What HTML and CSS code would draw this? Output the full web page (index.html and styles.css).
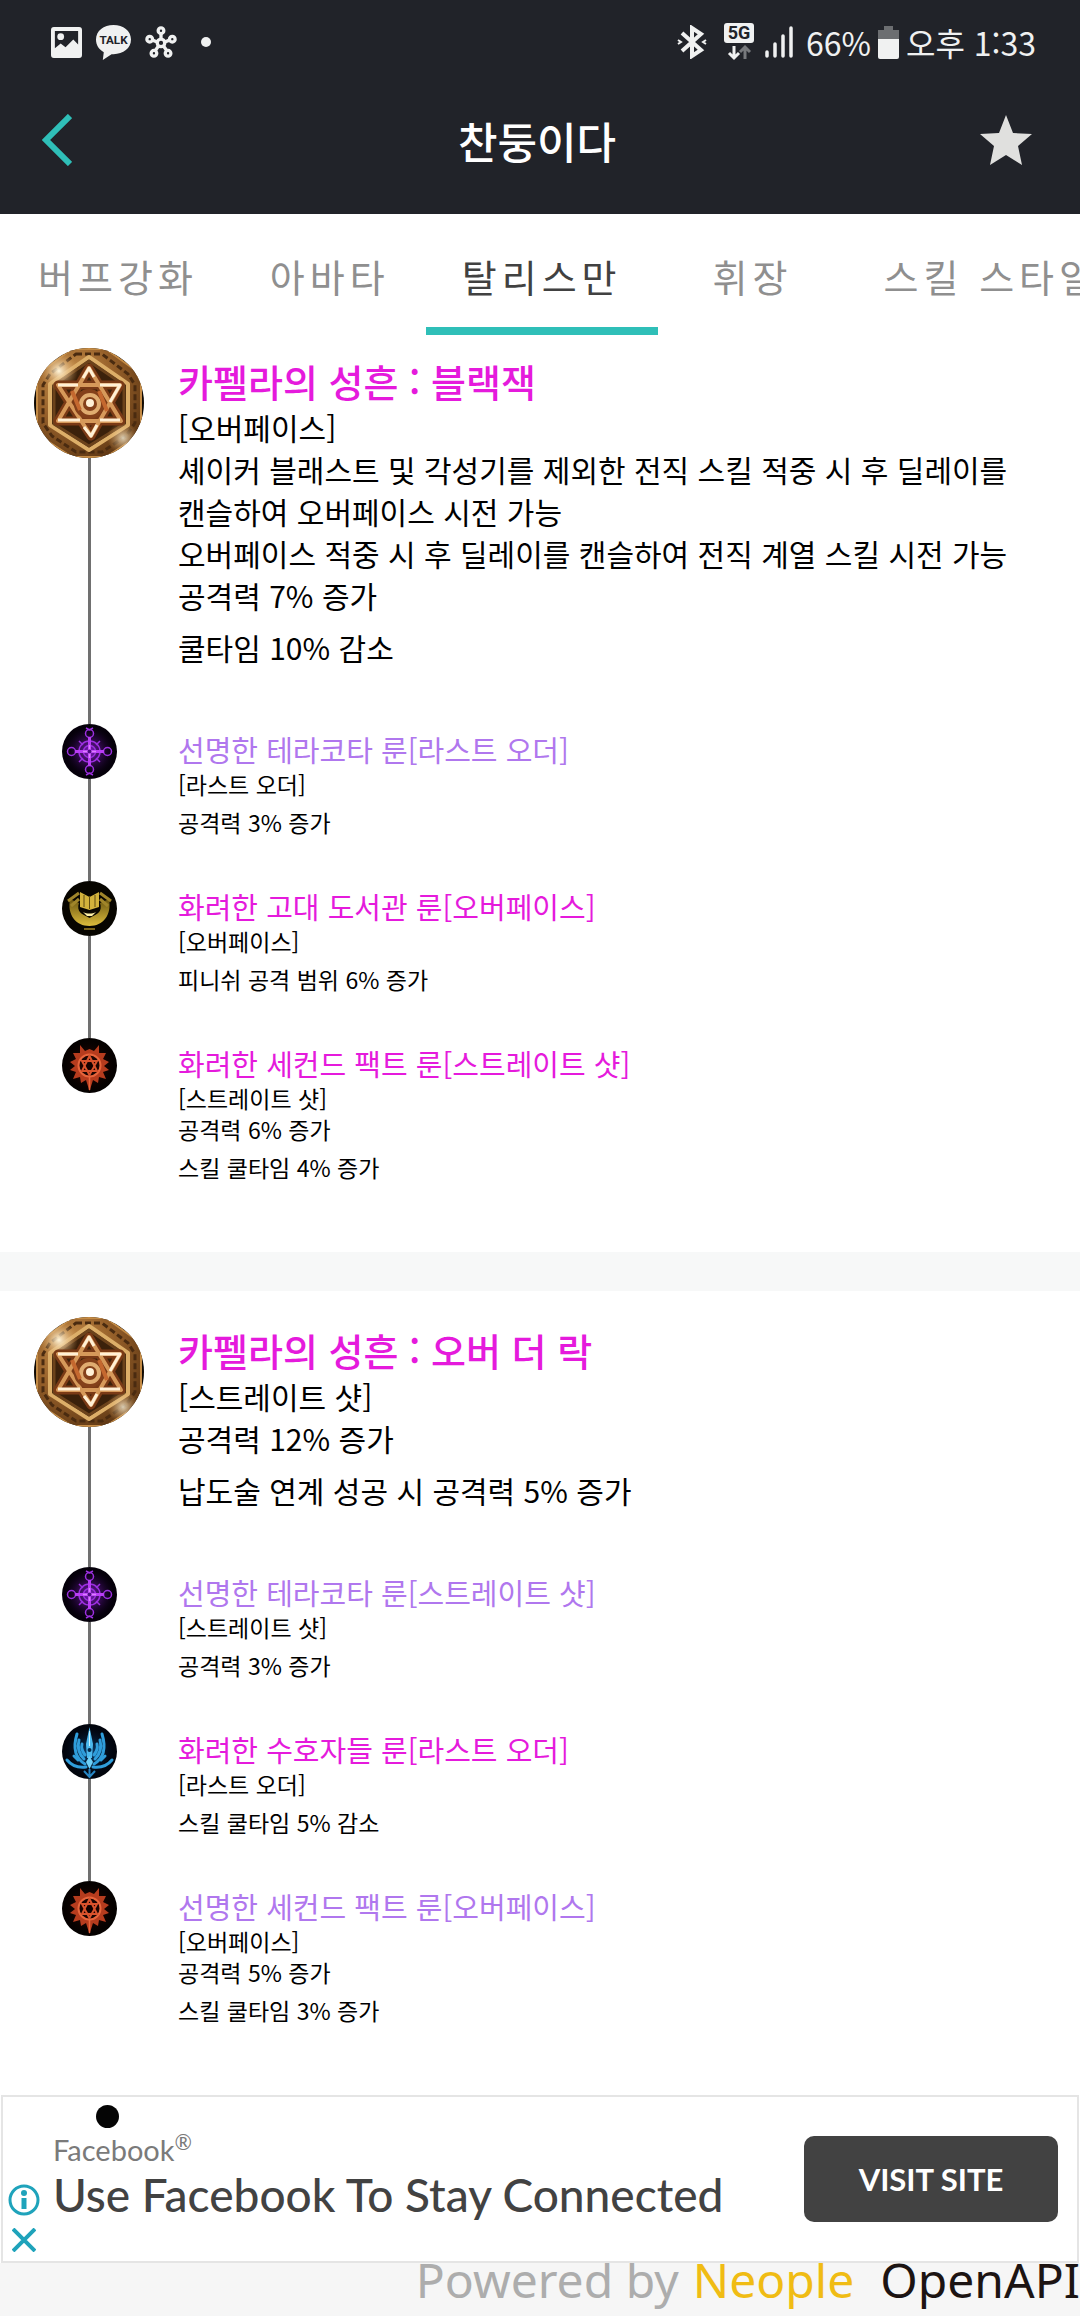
FILE: index.html
```html
<!DOCTYPE html>
<html lang="ko">
<head>
    <meta charset="UTF-8">
    <meta name="viewport" content="width=device-width, initial-scale=1.0">
    <title>찬둥이다</title>
    <link rel="stylesheet" href="styles.css">
</head>
<body>
    <svg class="sprite" aria-hidden="true">
        <defs>
            <radialGradient id="bronze" cx="0.35" cy="0.3" r="0.8">
                <stop offset="0" stop-color="#d29a52"/>
                <stop offset="0.5" stop-color="#96602a"/>
                <stop offset="1" stop-color="#5a3412"/>
            </radialGradient>
            <radialGradient id="shine">
                <stop offset="0" stop-color="#fff6dc"/>
                <stop offset="1" stop-color="#e0a860" stop-opacity="0"/>
            </radialGradient>
            <radialGradient id="violet">
                <stop offset="0" stop-color="#8a1fd0"/>
                <stop offset="1" stop-color="#1c0430" stop-opacity="0"/>
            </radialGradient>
            <radialGradient id="navy">
                <stop offset="0" stop-color="#0d4a80"/>
                <stop offset="1" stop-color="#020a1c" stop-opacity="0"/>
            </radialGradient>
            <radialGradient id="ember">
                <stop offset="0" stop-color="#5a1206"/>
                <stop offset="1" stop-color="#120201" stop-opacity="0"/>
            </radialGradient>
            <linearGradient id="gold" x1="0" y1="0" x2="0" y2="1">
                <stop offset="0" stop-color="#6a5510"/>
                <stop offset="1" stop-color="#dcbc3c"/>
            </linearGradient>
            <clipPath id="round"><circle cx="55" cy="55" r="55"/></clipPath>
        </defs>

        <symbol id="talisman" viewBox="0 0 110 110">
            <g clip-path="url(#round)" fill="none" stroke-linejoin="round">
                <rect width="110" height="110" fill="#0f0903"/>
                <path d="M38 1H72L101 22 107 34V78L98 92 72 109H38L12 92 3 78V34L9 22Z" fill="url(#bronze)" stroke="#c48b45" stroke-width="2"/>
                <path d="M42 6H68L94 26 101 37V75L92 88 68 104H42L18 88 9 75V37L16 26Z" stroke="#4a2b10" stroke-width="3" stroke-dasharray="6 3"/>
                <path d="M55 9 94 36V77L55 102 16 77V36Z" fill="#3b210b" stroke="#dcae68" stroke-width="4"/>
                <path d="M55 13 90 37V76L55 98 20 76V37Z" stroke="#6b421b" stroke-width="3"/>
                <circle cx="25" cy="23" r="19" fill="url(#shine)"/>
                <circle cx="89" cy="90" r="16" fill="url(#shine)" opacity="0.8"/>
                <path d="M55 20 87 73H24ZM24 37H86L57 88Z" stroke="#7a3a16" stroke-width="9"/>
                <path d="M55 20 87 73H24ZM24 37H86L57 88Z" stroke="#d6995a" stroke-width="4"/>
                <path d="M24 37H44M66 37H86L76 54M24 72H46M66 72H86M49 30 55 20 60 29M50 79 57 88 63 77" stroke="#fff0d6" stroke-width="3"/>
                <circle cx="55" cy="56" r="15" fill="#84401a"/>
                <circle cx="56" cy="56" r="9" stroke="#e0ac70" stroke-width="4"/>
                <circle cx="56" cy="55" r="4" fill="#fff0d6"/>
                <path d="M38 43 46 62M65 43 73 63" stroke="#c4682f" stroke-width="4"/>
            </g>
        </symbol>

        <symbol id="rune-terracotta" viewBox="0 0 55 55">
            <circle cx="27.5" cy="27.5" r="27.5" fill="#05000a"/>
            <circle cx="27.5" cy="27.5" r="25" fill="url(#violet)"/>
            <g fill="none" stroke="#9c2fe0" stroke-width="1.5">
                <circle cx="27.5" cy="27.5" r="10.5"/>
                <circle cx="27.5" cy="27.5" r="6"/>
                <circle cx="27.5" cy="9.5" r="4"/>
                <circle cx="27.5" cy="45.5" r="4"/>
                <circle cx="9.5" cy="27.5" r="4"/>
                <circle cx="45.5" cy="27.5" r="4"/>
                <path d="M17 17 21 21M38 17 34 21M17 38 21 34M38 38 34 34M24 4 27.5 6 31 4M24 51 27.5 49 31 51"/>
            </g>
            <path d="M27.5 13V42M13 27.5H42" stroke="#b93df5" stroke-width="3"/>
            <path d="M27.5 21V34M21 27.5H34" stroke="#dc80ff" stroke-width="1.5"/>
            <circle cx="27.5" cy="27.5" r="2" fill="#4e0c85"/>
        </symbol>

        <symbol id="rune-library" viewBox="0 0 55 55">
            <circle cx="27.5" cy="27.5" r="27.5" fill="#070500"/>
            <path d="M8 18C5 34 14 45 27.5 45S50 34 47 18L38 22C41 30 35 35 27.5 35S14 30 17 22Z" fill="url(#gold)"/>
            <path d="M6 20 17 12M9 25 17 18M49 20 38 12M46 25 38 18" stroke="#a0852a" stroke-width="3"/>
            <path d="M18 11 27.5 16 37 11V26L27.5 29 18 26Z" fill="#d2b23c"/>
            <path d="M23 10 27.5 16 32 10 30 8H25Z" fill="#070500"/>
            <path d="M27.5 15V28M22 14V26M33 14V26" stroke="#5f4b10"/>
            <path d="M17 28 27.5 31 38 28 33 34 27.5 37 22 34Z" fill="#0d0900"/>
            <path d="M21 31C25 33 30 33 34 31L30 35H25Z" fill="#fff2a8"/>
            <path d="M22 48H33" stroke="#7a621a" stroke-width="2"/>
        </symbol>

        <symbol id="rune-second" viewBox="0 0 55 55">
            <circle cx="27.5" cy="27.5" r="27.5" fill="#050100"/>
            <circle cx="27.5" cy="27.5" r="25" fill="url(#ember)"/>
            <path d="M18 7 23 13 27.5 11 32 13 37 7 37 15 44 15 41 21 47 24 42 28 47 32 41 34 44 41 37 39 36 45 31 42 27.5 53 24 42 19 45 18 39 11 41 14 34 8 32 13 28 8 24 14 21 11 15 18 15Z" fill="#b63c1e"/>
            <circle cx="27.5" cy="27.5" r="11" fill="#1c0502" stroke="#e8653c" stroke-width="2"/>
            <path d="M27.5 18 35 33H20ZM27.5 37 20 23H35Z" fill="none" stroke="#d9522c" stroke-width="2"/>
            <circle cx="27.5" cy="28" r="3" fill="#120201"/>
            <path d="M27.5 38V52" stroke="#e8653c" stroke-width="1.5"/>
        </symbol>

        <symbol id="rune-guardian" viewBox="0 0 55 55">
            <circle cx="27.5" cy="27.5" r="27.5" fill="#01040c"/>
            <circle cx="27.5" cy="27.5" r="26" fill="url(#navy)"/>
            <g fill="none" stroke="#2f9ddb" stroke-width="3" stroke-linecap="round">
                <path d="M23 40C13 34 11 23 15 10M22 35C17 30 15 24 17 16M23 31C20 27 19 24 20 20"/>
                <path d="M32 40C42 34 44 23 40 10M33 35C38 30 40 24 38 16M32 31C35 27 36 24 35 20"/>
                <path d="M24 43C17 44 10 42 5 36M31 43C38 44 45 42 50 36M12 32 16 36M43 32 39 36"/>
            </g>
            <path d="M27.5 3 31 20 30 34H25L24 20Z" fill="#4cb9ee"/>
            <path d="M27.5 7V22" stroke="#c4f0ff"/>
            <circle cx="27.5" cy="26" r="2" fill="#042a4c"/>
            <path d="M27.5 32 31 38 27.5 45 24 38Z" fill="#6fd0f7"/>
            <path d="M22 47 27.5 53 33 47M27.5 45V52" fill="none" stroke="#2786c4" stroke-width="2"/>
        </symbol>
    </svg>

    <div class="status-bar">
        <div class="status-left">
            <svg width="31" height="31" viewBox="0 0 32 32">
                <path fill="currentColor" fill-rule="evenodd" d="M3 0H29Q32 0 32 3V29Q32 32 29 32H3Q0 32 0 29V3Q0 0 3 0ZM4 4V22L10 17 15 21 23 13 28 18V4Z"/>
                <circle cx="10" cy="10" r="3.5" fill="currentColor"/>
            </svg>
            <svg width="35" height="35" viewBox="0 0 36 36">
                <path fill="currentColor" d="M18 0C28 0 36 6 36 15S28 30 18 30H16L7 36 8 28C3 25 0 21 0 15 0 6 8 0 18 0Z"/>
                <text x="18" y="20" class="talk-text">TALK</text>
            </svg>
            <svg width="32" height="32" viewBox="0 0 34 34" fill="none" stroke="currentColor" stroke-width="3.5">
                <circle cx="17" cy="18" r="4"/>
                <circle cx="17" cy="5" r="3"/>
                <circle cx="5" cy="14" r="3"/>
                <circle cx="29" cy="14" r="3"/>
                <circle cx="9.5" cy="29" r="3"/>
                <circle cx="24.5" cy="29" r="3"/>
                <path d="M17 8V14M8 15 13 17M26 15 21 17M11 26 14.5 21M23 26 19.5 21"/>
            </svg>
            <span class="more-dot"></span>
        </div>
        <div class="status-right">
            <svg width="30" height="34" viewBox="0 0 30 34" fill="none" stroke="currentColor" stroke-width="4">
                <path d="M5 8 24 25 15 31V3L24 9 5 26"/>
                <path d="M1 15 4 17 1 19M29 15 26 17 29 19" stroke-width="2"/>
            </svg>
            <svg class="network" width="30" height="38" viewBox="0 0 30 38">
                <rect width="30" height="20" rx="3" fill="currentColor"/>
                <text x="15" y="16" class="network-text">5G</text>
                <path d="M10 23V34M5 30 10 35 15 30" fill="none" stroke="currentColor" stroke-width="3"/>
                <path d="M21 36V25M16 29 21 24 26 29" fill="none" stroke="#77797c" stroke-width="3"/>
            </svg>
            <svg width="28" height="32" viewBox="0 0 28 32" stroke="currentColor" stroke-width="3.5" stroke-linecap="round">
                <path d="M2 26V30M10 18V30M18 10V30M26 2V30"/>
            </svg>
            <span class="percent">66%</span>
            <svg width="21" height="33" viewBox="0 0 21 33">
                <path d="M6 0H15V4H21V14H0V4H6Z" fill="#6c6e71"/>
                <path d="M0 13H21V31Q21 33 19 33H2Q0 33 0 31Z" fill="currentColor"/>
            </svg>
            <span>오후 1:33</span>
        </div>
    </div>

    <header class="header">
        <button class="icon-button" type="button" aria-label="뒤로">
            <svg width="30" height="52" viewBox="0 0 30 52"><path d="M28 2 4 26 28 50" fill="none" stroke="#2fbfb8" stroke-width="6"/></svg>
        </button>
        <h1>찬둥이다</h1>
        <button class="icon-button" type="button" aria-label="즐겨찾기">
            <svg width="52" height="50" viewBox="0 0 52 50"><path d="M26 0 33 18 52 19 38 31 42 50 26 40 10 50 14 31 0 19 19 18Z" fill="#e0e0de"/></svg>
        </button>
    </header>

    <nav class="tabs">
        <a href="#buff">버프강화</a>
        <a href="#avatar">아바타</a>
        <a href="#talisman-list" class="active">탈리스만</a>
        <a href="#insignia">휘장</a>
        <a href="#style">스킬 스타일</a>
    </nav>

    <main id="talisman-list">
        <section class="card">
            <div class="node">
                <div class="rail"><svg class="talisman-icon"><use href="#talisman"/></svg></div>
                <div class="info">
                    <h2>카펠라의 성흔 : 블랙잭</h2>
                    <p>[오버페이스]<br>셰이커 블래스트 및 각성기를 제외한 전직 스킬 적중 시 후 딜레이를<br>캔슬하여 오버페이스 시전 가능<br>오버페이스 적중 시 후 딜레이를 캔슬하여 전직 계열 스킬 시전 가능<br>공격력 7% 증가</p>
                    <p>쿨타임 10% 감소</p>
                </div>
            </div>
            <div class="node rune">
                <div class="rail"><svg class="rune-icon"><use href="#rune-terracotta"/></svg></div>
                <div class="info">
                    <h3 class="rare">선명한 테라코타 룬[라스트 오더]</h3>
                    <p>[라스트 오더]</p>
                    <p>공격력 3% 증가</p>
                </div>
            </div>
            <div class="node rune">
                <div class="rail"><svg class="rune-icon"><use href="#rune-library"/></svg></div>
                <div class="info">
                    <h3>화려한 고대 도서관 룬[오버페이스]</h3>
                    <p>[오버페이스]</p>
                    <p>피니쉬 공격 범위 6% 증가</p>
                </div>
            </div>
            <div class="node rune">
                <div class="rail"><svg class="rune-icon"><use href="#rune-second"/></svg></div>
                <div class="info">
                    <h3>화려한 세컨드 팩트 룬[스트레이트 샷]</h3>
                    <p>[스트레이트 샷]<br>공격력 6% 증가</p>
                    <p>스킬 쿨타임 4% 증가</p>
                </div>
            </div>
        </section>

        <section class="card">
            <div class="node">
                <div class="rail"><svg class="talisman-icon"><use href="#talisman"/></svg></div>
                <div class="info">
                    <h2>카펠라의 성흔 : 오버 더 락</h2>
                    <p>[스트레이트 샷]<br>공격력 12% 증가</p>
                    <p>납도술 연계 성공 시 공격력 5% 증가</p>
                </div>
            </div>
            <div class="node rune">
                <div class="rail"><svg class="rune-icon"><use href="#rune-terracotta"/></svg></div>
                <div class="info">
                    <h3 class="rare">선명한 테라코타 룬[스트레이트 샷]</h3>
                    <p>[스트레이트 샷]</p>
                    <p>공격력 3% 증가</p>
                </div>
            </div>
            <div class="node rune">
                <div class="rail"><svg class="rune-icon"><use href="#rune-guardian"/></svg></div>
                <div class="info">
                    <h3>화려한 수호자들 룬[라스트 오더]</h3>
                    <p>[라스트 오더]</p>
                    <p>스킬 쿨타임 5% 감소</p>
                </div>
            </div>
            <div class="node rune">
                <div class="rail"><svg class="rune-icon"><use href="#rune-second"/></svg></div>
                <div class="info">
                    <h3 class="rare">선명한 세컨드 팩트 룬[오버페이스]</h3>
                    <p>[오버페이스]<br>공격력 5% 증가</p>
                    <p>스킬 쿨타임 3% 증가</p>
                </div>
            </div>
        </section>
    </main>

    <aside class="ad">
        <span class="ad-dot"></span>
        <div class="ad-controls">
            <button type="button" aria-label="광고 정보">
                <svg width="32" height="32" viewBox="0 0 32 32">
                    <circle cx="16" cy="16" r="14" fill="none" stroke="#1fa3bb" stroke-width="3"/>
                    <path d="M16 14V25" stroke="#1fa3bb" stroke-width="5"/>
                    <circle cx="16" cy="9" r="3" fill="#1fa3bb"/>
                </svg>
            </button>
            <button type="button" aria-label="광고 닫기">
                <svg width="24" height="24" viewBox="0 0 24 24"><path d="M1 1 23 23M23 1 1 23" stroke="#1fa3bb" stroke-width="4"/></svg>
            </button>
        </div>
        <div class="ad-text">
            <p class="ad-brand">Facebook<sup>®</sup></p>
            <p class="ad-title">Use Facebook To Stay Connected</p>
        </div>
        <button class="visit" type="button">VISIT SITE</button>
    </aside>

    <footer class="footer">
        <span>Powered by</span>
        <span class="neople">Neople</span>
        <span class="openapi">OpenAPI</span>
    </footer>
</body>
</html>
```
FILE: styles.css
```css
* {
    box-sizing: border-box;
}
body {
    margin: 0;
    min-height: 100vh;
    display: flex;
    flex-direction: column;
    overflow-x: hidden;
    background-color: #fff;
    color: #000;
    font-family: 'Noto Sans CJK KR', sans-serif;
}
h1, h2, h3, p {
    margin: 0;
    font-weight: 400;
}
button {
    padding: 0;
    border: none;
    background: none;
    cursor: pointer;
}
svg {
    display: block;
    flex-shrink: 0;
}
.sprite {
    position: absolute;
    width: 0;
    height: 0;
}

/* status bar + header */
.status-bar {
    display: flex;
    justify-content: space-between;
    align-items: center;
    height: 84px;
    padding: 0 44px 0 51px;
    background-color: #212329;
    color: #f0f1f1;
    font-size: 32px;
}
.status-left, .status-right {
    display: flex;
    align-items: center;
    gap: 14px;
}
.status-right {
    gap: 7px;
}
.network {
    margin: 0 4px 0 10px;
}
.percent {
    margin-left: 6px;
}
.more-dot {
    width: 10px;
    height: 10px;
    margin-left: 10px;
    border-radius: 50%;
    background-color: #f0f1f1;
}
.talk-text, .network-text {
    font-family: Roboto, sans-serif;
    font-weight: 700;
    text-anchor: middle;
    fill: #212329;
}
.talk-text {
    font-size: 12px;
}
.network-text {
    font-size: 18px;
}
.header {
    display: flex;
    justify-content: space-between;
    align-items: center;
    height: 130px;
    padding: 0 48px 18px 42px;
    background-color: #212329;
}
.header h1 {
    color: #fff;
    font-size: 43px;
    font-weight: 500;
    line-height: 60px;
}
.icon-button {
    display: flex;
    width: 52px;
}

/* tabs */
.tabs {
    display: flex;
    height: 121px;
    padding-left: 2px;
    overflow: hidden;
    white-space: nowrap;
}
.tabs a {
    display: flex;
    align-items: center;
    justify-content: center;
    flex-shrink: 0;
    min-width: 190px;
    padding: 10px 36px 0;
    border-bottom: 8px solid transparent;
    color: #8f8f8f;
    font-size: 38px;
    letter-spacing: 5px;
    text-decoration: none;
}
.tabs a.active {
    border-color: #2fbfb8;
    color: #414141;
}

/* talisman cards */
main {
    flex: 1;
}
.card {
    padding: 26px 0;
}
.card:first-child {
    padding-top: 13px;
}
.card + .card {
    border-top: 39px solid #f7f8f8;
}
.node {
    display: flex;
}
.rail {
    display: flex;
    flex-direction: column;
    align-items: center;
    flex-shrink: 0;
    width: 178px;
}
.rail::after {
    content: "";
    flex: 1;
    width: 3px;
    background-color: #707070;
}
.node:last-child .rail::after {
    background: none;
}
.talisman-icon {
    width: 110px;
    height: 110px;
}
.rune-icon {
    width: 55px;
    height: 55px;
}
.info {
    padding: 8px 0 56px;
    font-size: 30px;
    line-height: 42px;
}
.info h2 {
    color: #e51adc;
    font-size: 38px;
    font-weight: 500;
    line-height: 50px;
}
.info p + p {
    margin-top: 10px;
}
.rune .info {
    padding: 5px 0 43px;
    font-size: 23px;
    line-height: 31px;
}
.rune h3 {
    color: #e51adc;
    font-size: 29px;
    line-height: 40px;
}
.rune h3.rare {
    color: #b077ee;
}
.rune .info p + p {
    margin-top: 7px;
}

/* ad banner */
.ad {
    position: relative;
    display: flex;
    align-items: center;
    height: 168px;
    margin: 0 1px;
    padding: 0 19px 0 5px;
    border: 2px solid #e5e5e5;
    font-family: Lato, sans-serif;
}
.ad-dot {
    position: absolute;
    top: 8px;
    left: 93px;
    width: 23px;
    height: 23px;
    border-radius: 50%;
    background-color: #050505;
}
.ad-controls {
    display: flex;
    flex-direction: column;
    align-items: center;
    align-self: flex-end;
    gap: 12px;
    padding-bottom: 9px;
}
.ad-text {
    flex: 1;
    padding: 0 0 4px 13px;
    white-space: nowrap;
}
.ad-brand {
    color: #7a7a7a;
    font-size: 29px;
    line-height: 36px;
}
.ad-brand sup {
    font-size: 21px;
    line-height: 0;
}
.ad-title {
    color: #424242;
    font-size: 46px;
    font-weight: 500;
    line-height: 54px;
}
.visit {
    width: 254px;
    height: 86px;
    border-radius: 10px;
    background-color: #424242;
    color: #fff;
    font-family: Lato, sans-serif;
    font-size: 31px;
    font-weight: 700;
}

/* footer */
.footer {
    display: flex;
    justify-content: flex-end;
    gap: 14px;
    height: 54px;
    background-color: #f6f6f6;
    color: #adadad;
    font-family: 'Noto Sans', sans-serif;
    font-size: 48px;
    line-height: 34px;
    white-space: nowrap;
}
.neople {
    color: #f0bc14;
}
.openapi {
    margin-left: 12px;
    color: #1c1413;
}
```
